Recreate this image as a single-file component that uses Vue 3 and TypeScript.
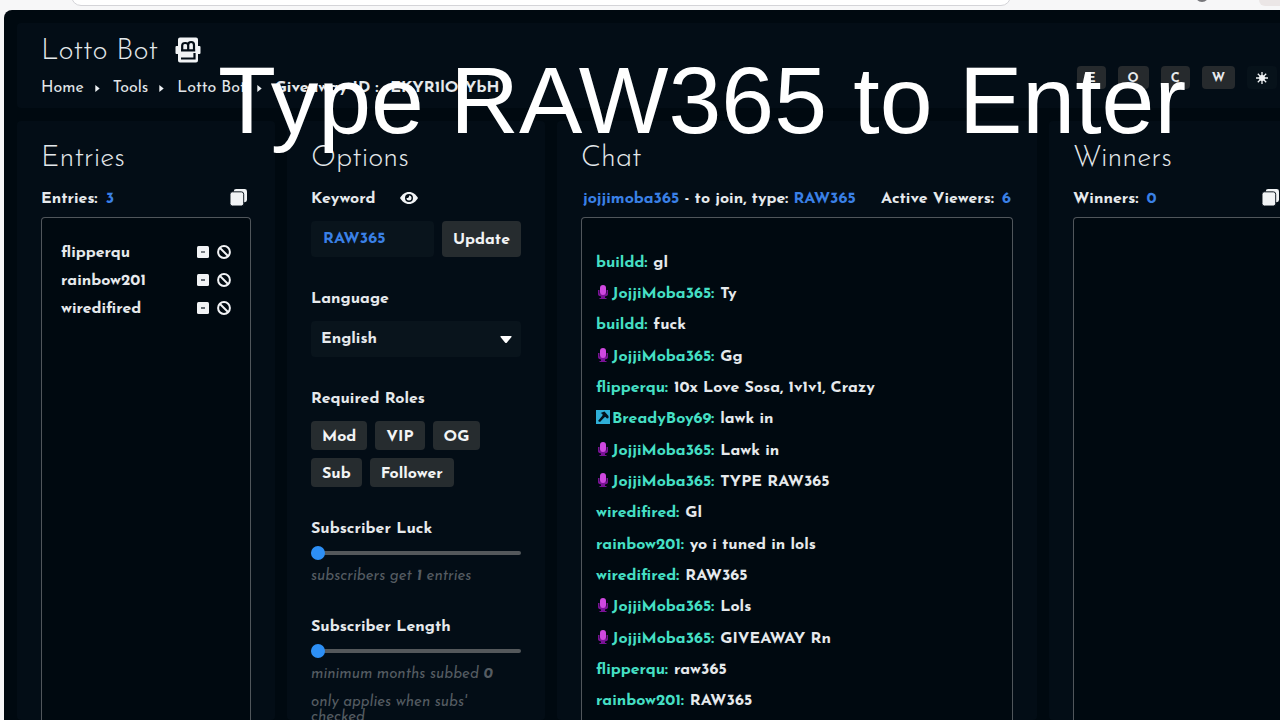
<script setup lang="ts">
import { ref } from 'vue'

interface Message {
  user: string
  text: string
  badge?: 'mic' | 'mod'
}

const crumbs = ['Home', 'Tools', 'Lotto Bot']
const toggles = ['E', 'O', 'C', 'W']
const entries = ['flipperqu', 'rainbow201', 'wiredifired']
const roles = ['Mod', 'VIP', 'OG', 'Sub', 'Follower']
const keyword = ref('RAW365')
const language = ref('English')
const luck = ref(1)
const months = ref(0)

const messages: Message[] = [
  { user: 'buildd', text: 'gl' },
  { user: 'JojjiMoba365', text: 'Ty', badge: 'mic' },
  { user: 'buildd', text: 'fuck' },
  { user: 'JojjiMoba365', text: 'Gg', badge: 'mic' },
  { user: 'flipperqu', text: '10x Love Sosa, 1v1v1, Crazy' },
  { user: 'BreadyBoy69', text: 'lawk in', badge: 'mod' },
  { user: 'JojjiMoba365', text: 'Lawk in', badge: 'mic' },
  { user: 'JojjiMoba365', text: 'TYPE RAW365', badge: 'mic' },
  { user: 'wiredifired', text: 'Gl' },
  { user: 'rainbow201', text: 'yo i tuned in lols' },
  { user: 'wiredifired', text: 'RAW365' },
  { user: 'JojjiMoba365', text: 'Lols', badge: 'mic' },
  { user: 'JojjiMoba365', text: 'GIVEAWAY Rn', badge: 'mic' },
  { user: 'flipperqu', text: 'raw365' },
  { user: 'rainbow201', text: 'RAW365' },
]
</script>

<template>
  <div class="screen">
    <div class="browser">
      <div class="address"></div>
      <div class="avatar"></div>
      <div class="ext"></div>
    </div>

    <main class="app">
      <header class="panel top">
        <div>
          <h1 class="title">
            Lotto Bot
            <svg class="logo" viewBox="0 0 26 26" aria-hidden="true">
              <path fill="#f1f3f5" d="M5 .5h16a2 2 0 0 1 2 2V9h1.500a1 1 0 0 1 1 1v6a1 1 0 0 1-1 1H23v6.500a2 2 0 0 1-2 2H5a2 2 0 0 1-2-2V17H1.500a1 1 0 0 1-1-1v-6a1 1 0 0 1 1-1H3V2.500a2 2 0 0 1 2-2z" />
              <path fill="none" stroke="#030d16" stroke-width="2.200" d="M6 21.500h13.500v-5.500M7.200 13.500V8.500q0-2.500 3-2.500t3 2.500v5M13.200 8q0-3 2.900-3T19 8v5.500M6 13.300h14.200" />
            </svg>
          </h1>
          <nav class="crumbs" aria-label="Breadcrumb">
            <template v-for="c in crumbs" :key="c">
              <a href="#">{{ c }}</a>
              <svg class="chev" viewBox="0 0 5 8" aria-hidden="true"><path d="M0 0l5 4-5 4z" fill="#eef1f4" /></svg>
            </template>
            <strong class="gid"><span>Giveaway ID :</span><span>EKYR1lOJYbH</span></strong>
          </nav>
        </div>
        <div class="toggles">
          <button v-for="t in toggles" :key="t" type="button">{{ t }}</button>
          <button type="button" class="sun" aria-label="Theme">
            <svg viewBox="0 0 12 12" aria-hidden="true">
              <circle cx="6" cy="6" r="3" fill="#f1f3f5" />
              <path stroke="#f1f3f5" stroke-width="1.300" d="M6 0v12M0 6h12M1.800 1.800l8.400 8.400M10.200 1.800L1.800 10.200" />
            </svg>
          </button>
        </div>
      </header>

      <div class="columns">
        <section class="panel col">
          <h2 class="title">Entries</h2>
          <div class="sub">
            <span>Entries: <b class="num count">3</b></span>
            <button type="button" class="icon copy" aria-label="Copy entries">
              <svg viewBox="0 0 18 18" aria-hidden="true">
                <rect x="4" y="0" width="14" height="14" rx="2.500" fill="#f1f3f5" />
                <rect x="0" y="3" width="14.500" height="15" rx="2.500" fill="#f1f3f5" stroke="#030d16" stroke-width="1" />
              </svg>
            </button>
          </div>
          <ul class="box entries">
            <li v-for="e in entries" :key="e">
              <span>{{ e }}</span>
              <button type="button" class="icon" :aria-label="`Remove ${e}`">
                <svg class="minus" viewBox="0 0 12 12" aria-hidden="true">
                  <rect width="12" height="12" rx="1.500" fill="#f1f3f5" />
                  <path d="M4 6h4" stroke="#030d16" stroke-width="1.200" />
                </svg>
              </button>
              <button type="button" class="icon" :aria-label="`Ban ${e}`">
                <svg class="ban" viewBox="0 0 14 14" aria-hidden="true">
                  <circle cx="7" cy="7" r="5.900" fill="none" stroke="#f1f3f5" stroke-width="2" />
                  <path d="M3 3l8 8" stroke="#f1f3f5" stroke-width="2" />
                </svg>
              </button>
            </li>
          </ul>
        </section>

        <section class="panel col">
          <h2 class="title">Options</h2>
          <form class="options" @submit.prevent>
            <div class="group">
              <div class="label keyword">
                <label for="keyword">Keyword</label>
                <button type="button" class="icon" aria-label="Show keyword">
                  <svg class="eye" viewBox="0 0 18 12" aria-hidden="true">
                    <path fill="#f1f3f5" fill-rule="evenodd" d="M9 0c4 0 7 2.600 9 6-2 3.400-5 6-9 6S2 9.400 0 6c2-3.400 5-6 9-6zm0 2a4 4 0 1 0 0 8 4 4 0 0 0 0-8z" />
                    <path fill="#f1f3f5" d="M9 3.500A2.500 2.500 0 1 1 6.500 6 2 2 0 0 0 9 3.500z" />
                  </svg>
                </button>
              </div>
              <div class="kwrow">
                <input id="keyword" v-model="keyword" type="text" />
                <button type="button" class="btn">Update</button>
              </div>
            </div>
            <div class="group">
              <label class="label" for="language">Language</label>
              <div class="selwrap">
                <select id="language" v-model="language">
                  <option>English</option>
                  <option>Español</option>
                </select>
                <svg class="caret" viewBox="0 0 12 7" aria-hidden="true"><path d="M1 0h10q1 0 .5 1L7 6.500q-1 1-2 0L.5 1Q0 0 1 0z" fill="#fff" /></svg>
              </div>
            </div>
            <div class="group">
              <div class="label">Required Roles</div>
              <div class="roles">
                <button v-for="r in roles" :key="r" type="button" class="btn">{{ r }}</button>
              </div>
            </div>
            <div class="group tight">
              <label class="label" for="luck">Subscriber Luck</label>
              <input id="luck" v-model="luck" type="range" min="1" max="10" />
              <p class="hint">subscribers get <b>{{ luck }}</b> entries</p>
            </div>
            <div class="group tight">
              <label class="label" for="months">Subscriber Length</label>
              <input id="months" v-model="months" type="range" min="0" max="12" />
              <p class="hint">minimum months subbed <b>{{ months }}</b></p>
              <p class="hint note">only applies when subs' checked</p>
            </div>
          </form>
        </section>

        <section class="panel col">
          <h2 class="title">Chat</h2>
          <div class="sub viewers">
            <span><b class="num">jojjimoba365</b> - to join, type: <b class="num">RAW365</b></span>
            <span>Active Viewers: <b class="num count">6</b></span>
          </div>
          <ul class="box chat">
            <li v-for="(m, i) in messages" :key="i">
              <svg v-if="m.badge === 'mic'" class="badge" viewBox="0 0 14 14" aria-hidden="true">
                <path fill="#7a1296" d="M2 5h1.500v3.500h7V5H12v4.500Q12 11 9 11.500V13h1.500v1h-7v-1H5v-1.500Q2 11 2 9.500z" />
                <rect x="4" y="0" width="6" height="10" rx="3" fill="#cf48e0" />
              </svg>
              <svg v-if="m.badge === 'mod'" class="badge" viewBox="0 0 14 14" aria-hidden="true">
                <rect width="14" height="14" fill="#2fafd8" />
                <path fill="#04131d" d="M4.500 3l4-1.500L12.500 6v2l-1.500.5-1.500-1.500-1 .3L4 12l-2-1 4.500-5.500L6.500 4z" />
              </svg>
              <b class="user">{{ m.user }}:</b>
              <span>{{ m.text }}</span>
            </li>
          </ul>
        </section>

        <section class="panel col">
          <h2 class="title">Winners</h2>
          <div class="sub">
            <span>Winners: <b class="num count">0</b></span>
            <button type="button" class="icon copy" aria-label="Copy winners">
              <svg viewBox="0 0 18 18" aria-hidden="true">
                <rect x="4" y="0" width="14" height="14" rx="2.500" fill="#f1f3f5" />
                <rect x="0" y="3" width="14.500" height="15" rx="2.500" fill="#f1f3f5" stroke="#030d16" stroke-width="1" />
              </svg>
            </button>
          </div>
          <div class="box"></div>
        </section>
      </div>
    </main>

    <div class="caption">Type RAW365 to Enter</div>
  </div>
</template>

<style>
body {
  margin: 0;
  overflow: hidden;
  background: #f6f6f8;
}
</style>

<style scoped>
* {
  box-sizing: border-box;
}
.screen {
  position: relative;
  display: flex;
  flex-direction: column;
  height: 100vh;
  overflow: hidden;
  font: 700 16px/24px 'Josefin Sans', Lato, sans-serif;
  color: #e6e9ec;
}
b,
strong {
  font-weight: 700;
}
.browser {
  display: flex;
  flex: none;
  height: 10px;
  overflow: hidden;
  background: #f7f7f8;
}
.address {
  flex: 0 0 940px;
  height: 20px;
  margin: -14px 0 0 71px;
  background: #fff;
  border: 1px solid #d4d4d8;
  border-radius: 10px;
}
.avatar {
  width: 14px;
  height: 14px;
  margin: -12px 0 0 184px;
  border-radius: 50%;
  background: #77777b;
}
.ext {
  flex: 1;
  height: 6px;
  margin-left: 50px;
  border-radius: 0 0 0 6px;
  background: #ebe6e6;
}
.app {
  display: flex;
  flex: 1;
  flex-direction: column;
  gap: 13px;
  min-height: 0;
  margin: 0 -40px 0 4px;
  padding: 13px 13px 0;
  background: #000910;
  border-radius: 8px 0 0 0;
}
.panel {
  background: #030d16;
  border-radius: 4px;
  padding: 0 24px;
}
.title {
  margin: 0;
  font-weight: 300;
  font-size: 29px;
  line-height: 42px;
  color: #e4e8eb;
}
.top {
  display: flex;
  justify-content: space-between;
  align-items: flex-end;
  padding: 8px 30px 8px 24px;
}
.top .title {
  display: flex;
  align-items: center;
  gap: 17px;
}
.logo {
  width: 26px;
  height: 26px;
  margin-bottom: 5px;
}
.crumbs {
  display: flex;
  align-items: center;
  margin-top: 3px;
  font-weight: 400;
}
.crumbs a {
  color: #e2e6e9;
  text-decoration: none;
}
.chev {
  width: 5px;
  height: 7px;
  margin: 0 13px 0 11px;
}
.gid {
  display: flex;
  gap: 12px;
}
.toggles {
  display: flex;
  gap: 12px;
  margin-bottom: 11px;
}
.toggles button {
  height: 23px;
  padding: 0 10px;
  border: 0;
  border-radius: 4px;
  background: #262a2d;
  color: #e8ebed;
  font: inherit;
  font-size: 13px;
  line-height: 25px;
}
.toggles .sun {
  display: flex;
  align-items: center;
  padding: 0 9px;
  background: #07121a;
}
.sun svg {
  width: 12px;
  height: 12px;
}
.columns {
  display: grid;
  flex: 1;
  grid-template-columns: 258px 258px minmax(0, 1fr) 258px;
  gap: 12px;
  min-height: 0;
}
.col {
  display: flex;
  flex-direction: column;
  min-width: 0;
  min-height: 0;
  padding-top: 17px;
}
.sub {
  display: flex;
  justify-content: space-between;
  align-items: center;
  margin: 6px 0 4px;
  line-height: 27px;
  white-space: nowrap;
}
.viewers {
  padding: 0 2px;
}
.num {
  color: #3a80e6;
}
.count {
  margin-left: 3px;
}
.icon {
  display: flex;
  padding: 0;
  border: 0;
  background: none;
}
.copy {
  margin: 0 4px 4px 0;
}
.copy svg {
  width: 17px;
  height: 17px;
}
.box {
  flex: 1;
  min-height: 0;
  margin: 0;
  overflow: hidden;
  list-style: none;
  border: 1px solid #50565b;
  border-bottom: 0;
  border-radius: 4px 4px 0 0;
  background: #000910;
}
.entries {
  padding: 20px 19px;
}
.entries li {
  display: flex;
  align-items: center;
  gap: 8px;
  height: 28px;
}
.entries span {
  flex: 1;
  padding-top: 2px;
}
.minus {
  width: 12px;
  height: 12px;
}
.ban {
  width: 14px;
  height: 14px;
}
.options {
  display: flex;
  flex-direction: column;
  gap: 29px;
  margin-top: 6px;
}
.group {
  display: flex;
  flex-direction: column;
  gap: 8px;
}
.tight {
  gap: 0;
}
.label {
  display: block;
  line-height: 27px;
}
.keyword {
  display: flex;
  align-items: center;
  gap: 25px;
}
.eye {
  width: 18px;
  height: 12px;
  margin-bottom: 4px;
}
.kwrow {
  display: flex;
  gap: 8px;
}
.kwrow input,
select {
  flex: 1;
  width: 100%;
  min-width: 0;
  height: 36px;
  padding: 0 10px;
  border: 0;
  border-radius: 4px;
  appearance: none;
  background: #09141c;
  color: #e6e9ec;
  font: inherit;
}
.kwrow input {
  padding: 0 12px;
  color: #3a80e6;
}
.btn {
  padding: 2px 11px 0;
  border: 0;
  border-radius: 4px;
  background: #262c2f;
  color: #f2f4f5;
  font: inherit;
}
.selwrap {
  position: relative;
  display: flex;
}
.caret {
  position: absolute;
  right: 9px;
  top: 15px;
  width: 12px;
  height: 7px;
  pointer-events: none;
}
.roles {
  display: flex;
  flex-wrap: wrap;
  gap: 8px;
}
.roles .btn {
  height: 29px;
}
input[type='range'] {
  width: 100%;
  height: 20px;
  margin: 0;
  appearance: none;
  background: none;
}
input[type='range']::-webkit-slider-runnable-track {
  height: 4px;
  border-radius: 2px;
  background: #54585b;
}
input[type='range']::-webkit-slider-thumb {
  width: 14px;
  height: 14px;
  margin-top: -5px;
  border-radius: 50%;
  appearance: none;
  background: #2d8ff5;
}
.hint {
  margin: 5px 0 0;
  font-style: italic;
  font-weight: 400;
  font-size: 15px;
  line-height: 17px;
  color: #555c62;
}
.hint b {
  font-weight: 700;
}
.note {
  margin-top: 12px;
  padding-right: 40px;
  line-height: 15px;
}
.chat {
  padding: 29px 14px 0;
}
.chat li {
  display: flex;
  align-items: center;
  height: 31px;
  white-space: nowrap;
}
.chat li:nth-child(3n) {
  height: 32px;
}
.badge {
  width: 14px;
  height: 14px;
  margin: 0 2px 4px 0;
}
.user {
  margin-right: 6px;
  color: #45dfc4;
}
.caption {
  position: absolute;
  inset: 47px 0 auto 218px;
  font: 400 95px/106px 'Liberation Sans', Arial, sans-serif;
  color: #fff;
  white-space: nowrap;
  pointer-events: none;
}
</style>
